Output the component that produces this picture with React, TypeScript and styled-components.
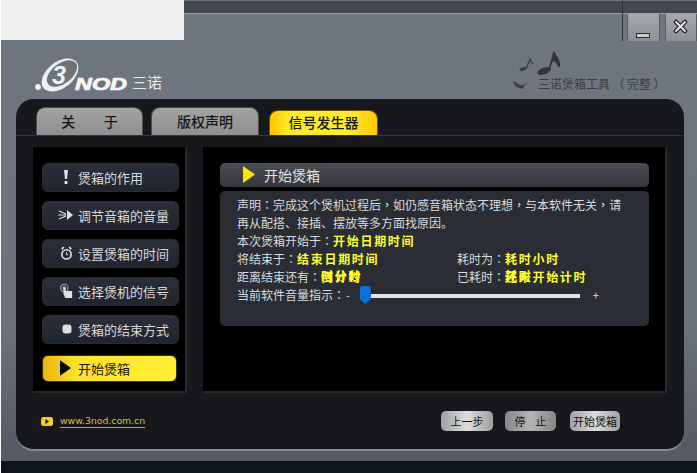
import React from 'react'
import styled, { createGlobalStyle } from 'styled-components'

const GlobalStyle = createGlobalStyle`
  html, body {
    margin: 0;
    background: #ffffff;
  }
  body {
    font-family: "Noto Sans CJK SC", "Liberation Sans", sans-serif;
  }
`

const Screen = styled.div`
  border-left: 1px solid #ffffff;
  box-sizing: border-box;
  display: flex;
  flex-direction: column;
  height: 473px;
  overflow: hidden;
  position: relative;
  width: 697px;
`

// Leftover bright patch in the top left corner of the capture
const BlankPatch = styled.div`
  background: #f0f0f0;
  height: 40px;
  left: -1px;
  position: absolute;
  top: 0;
  width: 184px;
`

const TopBar = styled.div`
  background: #434850;
  border-bottom: 1px solid #989ca3;
  border-top: 1px solid #6f747b;
  flex: none;
  height: 12px;
`

const WindowControls = styled.div`
  border-left: 1px solid #33373d;
  display: flex;
  gap: 5px;
  height: 41px;
  padding-left: 4px;
  position: absolute;
  right: 0;
  top: 0;
  width: 70px;
`

const ControlButton = styled.div<{ wide: number }>`
  align-items: flex-end;
  background: linear-gradient(#a6a8ab 0%, #8d9094 100%);
  border-left: 1px solid #5a5e63;
  border-right: 1px solid #5a5e63;
  box-sizing: border-box;
  display: flex;
  height: 27px;
  justify-content: center;
  margin-top: 14px;
  padding-bottom: 3px;
  width: ${({ wide }) => wide}px;
`

const Body = styled.div`
  background: linear-gradient(#70767e 0%, #6c7279 70%, #555a62 100%);
  display: flex;
  flex: none;
  flex-direction: column;
  height: 447px;
`

const Header = styled.div`
  display: flex;
  flex: none;
  height: 85px;
  justify-content: space-between;
  padding: 0 29px 0 33px;
`

const LogoBlock = styled.div`
  align-items: flex-end;
  display: flex;
  gap: 0;
  padding-bottom: 6px;
`

const LogoName = styled.span`
  color: #e8e9ea;
  font-size: 15px;
  line-height: 17px;
  padding-bottom: 3px;
`

const ProductBlock = styled.div`
  align-self: flex-end;
  display: flex;
  flex-direction: column;
  padding-bottom: 6px;
`

const ProductTitle = styled.div`
  align-items: center;
  color: #3b3f45;
  display: flex;
  font-size: 12px;
  gap: 10px;
  line-height: 18px;
`

const Panel = styled.div`
  background: #17181c;
  border-bottom: 2px solid #858a91;
  border-radius: 18px;
  box-sizing: border-box;
  display: flex;
  flex: none;
  flex-direction: column;
  height: 352px;
  margin-left: 15px;
  padding-top: 8px;
  width: 668px;
`

const TabRow = styled.div`
  align-items: flex-end;
  border-bottom: 1px solid #33353a;
  display: flex;
  flex: none;
  height: 28px;
  padding-left: 20px;
`

const Tab = styled.div<{ active?: boolean; wide: number; gapAfter: number }>`
  align-items: center;
  background: ${({ active }) =>
    active
      ? 'linear-gradient(90deg, #ffc400 0%, #ffe92c 18%, #ffe92c 75%, #ffc800 100%)'
      : 'linear-gradient(#a3a3a3 0%, #8f8f8f 100%)'};
  border: 1px solid ${({ active }) => (active ? '#6b5200' : '#4c4c4c')};
  border-bottom: none;
  border-radius: 9px 9px 0 0;
  box-sizing: border-box;
  color: #17171a;
  display: flex;
  font-size: 14px;
  font-weight: 500;
  height: ${({ active }) => (active ? 25 : 28)}px;
  justify-content: center;
  line-height: 20px;
  margin-right: ${({ gapAfter }) => gapAfter}px;
  padding-bottom: 2px;
  white-space: pre;
  width: ${({ wide }) => wide}px;
`

const ContentRow = styled.div`
  display: flex;
  flex: none;
  gap: 16px;
  height: 246px;
  margin-top: 11px;
  padding-left: 17px;
`

const SidePanel = styled.div`
  background: #000000;
  border-bottom: 2px solid #26282c;
  border-right: 2px solid #26282c;
  box-sizing: border-box;
  display: flex;
  flex-direction: column;
  padding: 16px 0 0 9px;
  width: 154px;
`

const MenuButton = styled.div<{ active?: boolean }>`
  align-items: center;
  background: ${({ active }) =>
    active
      ? 'linear-gradient(90deg, #e8b612 0%, #fde22a 25%, #ffef36 100%)'
      : 'linear-gradient(#2a2e37 0%, #21252e 100%)'};
  border: 1px solid ${({ active }) => (active ? '#3f3510' : '#2a2d35')};
  border-radius: 6px;
  box-sizing: border-box;
  color: ${({ active }) => (active ? '#1a1606' : '#d7d9dc')};
  display: flex;
  font-size: 13px;
  height: ${({ active }) => (active ? 27 : 29)}px;
  margin-bottom: 9px;
  margin-top: ${({ active }) => (active ? 2 : 0)}px;
  padding-bottom: 1px;
  width: ${({ active }) => (active ? 135 : 137)}px;
`

const IconSlot = styled.span<{ inset: number }>`
  box-sizing: border-box;
  display: flex;
  flex: none;
  justify-content: flex-end;
  padding-right: ${({ inset }) => inset}px;
  width: 35px;
`

const MainPanel = styled.div`
  background: #000000;
  border-bottom: 2px solid #26282c;
  border-right: 2px solid #26282c;
  box-sizing: border-box;
  display: flex;
  flex-direction: column;
  padding: 16px 0 0 17px;
  width: 464px;
`

const SectionBar = styled.div`
  align-items: center;
  background: linear-gradient(#4b4d53 0%, #35373c 100%);
  border-radius: 5px;
  box-sizing: border-box;
  color: #e2e3e4;
  display: flex;
  flex: none;
  font-size: 14px;
  gap: 9px;
  height: 24px;
  padding-bottom: 1px;
  padding-left: 23px;
  width: 429px;
`

const InfoBox = styled.div`
  background: #2a2d34;
  border-radius: 5px;
  box-sizing: border-box;
  color: #d9dbdd;
  display: flex;
  flex: none;
  flex-direction: column;
  font-size: 12px;
  height: 135px;
  line-height: 18px;
  margin-top: 4px;
  padding: 5px 0 0 17px;
  width: 429px;
`

const NoticeLine = styled.div`
  height: 18px;
  white-space: nowrap;
`

const Punct = styled.span`
  font-family: "Noto Sans CJK TC", "Noto Sans CJK SC", sans-serif;
`

const TitleParen = styled(Punct)`
  margin: 0 2.5px;
`

const InfoRow = styled.div`
  display: grid;
  grid-template-columns: 220px 1fr;
  height: 18px;
  white-space: nowrap;
`

const Value = styled.span`
  color: #ffff2e;
  font-weight: 700;
  letter-spacing: 1.7px;
  position: relative;
`

// The original draws a second string on top of the first one
const ValueOverlay = styled.span`
  left: 0;
  position: absolute;
  top: -1px;
`

const SliderRow = styled.div`
  align-items: center;
  display: flex;
  height: 18px;
  white-space: nowrap;
`

const SliderSign = styled.span`
  font-size: 11px;
  margin-left: 1px;
`

const SliderThumb = styled.div`
  background: #0d6fd8;
  border-radius: 3px 3px 0 0;
  clip-path: polygon(0 0, 100% 0, 100% 72%, 50% 100%, 0 72%);
  flex: none;
  height: 18px;
  margin-left: 10px;
  width: 11px;
`

const SliderTrack = styled.div`
  background: #e6e6e6;
  flex: none;
  height: 4px;
  margin-top: 2px;
  width: 209px;
`

const PlusSign = styled.span`
  font-size: 11px;
  margin-left: 13px;
`

const FooterRow = styled.div`
  align-items: center;
  display: flex;
  flex: 1;
  padding: 0 64px 0 25px;
`

const SiteLink = styled.a`
  align-items: center;
  color: #d9bf3c;
  display: flex;
  font-family: "DejaVu Sans", sans-serif;
  font-size: 9.3px;
  gap: 7px;
  line-height: 12px;
`

const SiteText = styled.span`
  border-bottom: 1px solid #c9a920;
  width: 85px;
`

const ActionGroup = styled.div`
  align-items: center;
  display: flex;
  margin-left: auto;
`

const ActionButton = styled.div<{ wide: number; gapAfter: number; dim?: boolean }>`
  align-items: center;
  background: ${({ dim }) =>
    dim
      ? 'linear-gradient(90deg, #858585 0%, #b5b5b5 50%, #858585 100%)'
      : 'linear-gradient(90deg, #a0a0a0 0%, #dcdcdc 50%, #a0a0a0 100%)'};
  border-radius: 5px;
  color: #141414;
  display: flex;
  font-size: 11px;
  height: 20px;
  justify-content: center;
  margin-right: ${({ gapAfter }) => gapAfter}px;
  white-space: pre;
  width: ${({ wide }) => wide}px;
`

const BottomStrip = styled.div`
  background: #0e141d;
  flex: 1;
`

const Logo = () => (
  <svg width="98" height="36" viewBox="0 0 98 36">
    <circle cx="4" cy="30" r="2.9" fill="#f2f3f4" />
    <ellipse cx="26" cy="18" rx="21" ry="13" fill="#eff0f1" transform="rotate(-38 26 18)" />
    <ellipse cx="28" cy="16.5" rx="17.5" ry="10" fill="#6e747c" transform="rotate(-38 28 16.5)" />
    <text x="18" y="27" fontFamily="Liberation Sans" fontSize="25" fontStyle="italic" fontWeight="700" fill="#eff0f1">
      3
    </text>
    <text
      x="41"
      y="33"
      fontFamily="Liberation Sans"
      fontSize="16"
      fontStyle="italic"
      fontWeight="700"
      fill="#f6f6f6"
      stroke="#f6f6f6"
      strokeWidth="0.7"
      textLength="52"
      lengthAdjust="spacingAndGlyphs"
    >
      NOD
    </text>
  </svg>
)

const MusicNotes = () => (
  <svg width="46" height="24" viewBox="0 0 46 24" style={{ marginLeft: 7 }}>
    <ellipse cx="4" cy="18" rx="3.6" ry="1.8" fill="#3d4148" transform="rotate(-20 4 18)" />
    <path d="M7 18 L11 8 C12 10 13 12 14 13" fill="none" stroke="#3d4148" strokeWidth="1.4" />
    <ellipse cx="25" cy="20" rx="7" ry="3.4" fill="#33373d" transform="rotate(-20 25 20)" />
    <path d="M30 19 L35 1 C36 6 42 9 40 16 C39 11 36 10 34.5 9" fill="#33373d" stroke="#33373d" strokeWidth="1.6" />
  </svg>
)

const Swoosh = () => (
  <svg width="16" height="9" viewBox="0 0 16 9">
    <path d="M1 2 C3 0 5 4 8 5 C10 6 12 4 15 3 L12 6 L11 9 C7 8 3 7 1 2 Z" fill="#3b3f45" />
  </svg>
)

const MinimizeIcon = () => (
  <svg width="14" height="5" viewBox="0 0 14 5">
    <rect x="0.5" y="0.5" width="13" height="4" fill="#cfcfcf" stroke="#26282b" />
  </svg>
)

const CloseIcon = () => (
  <svg width="15" height="15" viewBox="0 0 15 15" style={{ marginBottom: 4 }}>
    <path d="M3 3 L12 12 M12 3 L3 12" stroke="#1f2023" strokeWidth="4.5" strokeLinecap="round" />
    <path d="M3 3 L12 12 M12 3 L3 12" stroke="#e6e6e6" strokeWidth="2" strokeLinecap="round" />
  </svg>
)

const BangIcon = () => (
  <svg width="8" height="16" viewBox="0 0 8 16">
    <path d="M2 1 H6 L5 10 H3 Z" fill="#dfe0e1" />
    <rect x="2.6" y="12" width="2.8" height="3" fill="#dfe0e1" />
  </svg>
)

const SpeakerIcon = () => (
  <svg width="16" height="14" viewBox="0 0 16 14">
    <path d="M9 2 L15 7 L9 12 Z" fill="#dfe0e1" />
    <path d="M1 3 L8 6 M0 7 H8 M1 11 L8 8" stroke="#dfe0e1" strokeWidth="1.2" />
  </svg>
)

const ClockIcon = () => (
  <svg width="13" height="16" viewBox="0 0 14 16">
    <circle cx="7" cy="9.5" r="5" fill="none" stroke="#dfe0e1" strokeWidth="1.8" />
    <path d="M2 4 L4 1.5 M12 4 L10 1.5" stroke="#dfe0e1" strokeWidth="2" />
    <path d="M7 7 V10 H9" fill="none" stroke="#dfe0e1" strokeWidth="1" />
  </svg>
)

const TouchIcon = () => (
  <svg width="13" height="16" viewBox="0 0 15 17">
    <circle cx="5" cy="5" r="4.3" fill="none" stroke="#a9acb0" strokeWidth="1.2" />
    <circle cx="5" cy="5" r="2" fill="#c9cbcd" />
    <path d="M4 5 H6.5 V8.5 H14 V16.5 H6 L4 12 Z" fill="#dfe0e1" />
  </svg>
)

const DotIcon = () => (
  <svg width="10" height="10" viewBox="0 0 10 10">
    <rect x="0.5" y="0.5" width="9" height="9" rx="3" fill="#dfe0e1" />
  </svg>
)

const TriangleIcon = ({ fill, wide, high }: { fill: string; wide: number; high: number }) => (
  <svg width={wide} height={high} viewBox="0 0 10 14">
    <path d="M0 0 L10 7 L0 14 Z" fill={fill} />
  </svg>
)

const PlayBadge = () => (
  <svg width="12" height="9" viewBox="0 0 12 9">
    <rect width="12" height="9" rx="2.5" fill="#f0cd2a" />
    <path d="M4.5 2 L8 4.5 L4.5 7 Z" fill="#17181c" />
  </svg>
)

const menuItems = [
  { label: '煲箱的作用', icon: <BangIcon />, inset: 8 },
  { label: '调节音箱的音量', icon: <SpeakerIcon />, inset: 4 },
  { label: '设置煲箱的时间', icon: <ClockIcon />, inset: 5 },
  { label: '选择煲机的信号', icon: <TouchIcon />, inset: 5 },
  { label: '煲箱的结束方式', icon: <DotIcon />, inset: 6 },
]

export default function App() {
  return (
    <Screen>
      <GlobalStyle />
      <TopBar />
      <Body>
        <Header>
          <LogoBlock>
            <Logo />
            <LogoName>三诺</LogoName>
          </LogoBlock>
          <ProductBlock>
            <MusicNotes />
            <ProductTitle>
              <Swoosh />
              <span>
                三诺煲箱工具<TitleParen>（</TitleParen>完整<TitleParen>）</TitleParen>
              </span>
            </ProductTitle>
          </ProductBlock>
        </Header>
        <Panel>
          <TabRow>
            <Tab wide={107} gapAfter={8}>关         于</Tab>
            <Tab wide={108} gapAfter={10}>版权声明</Tab>
            <Tab wide={109} gapAfter={0} active>信号发生器</Tab>
          </TabRow>
          <ContentRow>
            <SidePanel>
              {menuItems.map(({ label, icon, inset }) => (
                <MenuButton key={label}>
                  <IconSlot inset={inset}>{icon}</IconSlot>
                  <span>{label}</span>
                </MenuButton>
              ))}
              <MenuButton active>
                <IconSlot inset={7}>
                  <TriangleIcon fill="#0b0b06" wide={11} high={16} />
                </IconSlot>
                <span>开始煲箱</span>
              </MenuButton>
            </SidePanel>
            <MainPanel>
              <SectionBar>
                <TriangleIcon fill="#ffe600" wide={12} high={17} />
                <span>开始煲箱</span>
              </SectionBar>
              <InfoBox>
                <NoticeLine>
                  声明<Punct>：</Punct>完成这个煲机过程后<Punct>，</Punct>如仍感音箱状态不理想<Punct>，</Punct>与本软件无关<Punct>，</Punct>请
                </NoticeLine>
                <NoticeLine>再从配搭、接插、摆放等多方面找原因。</NoticeLine>
                <InfoRow>
                  <span>
                    本次煲箱开始于<Punct>：</Punct>
                    <Value>开始日期时间</Value>
                  </span>
                </InfoRow>
                <InfoRow>
                  <span>
                    将结束于<Punct>：</Punct>
                    <Value>结束日期时间</Value>
                  </span>
                  <span>
                    耗时为<Punct>：</Punct>
                    <Value>耗时小时</Value>
                  </span>
                </InfoRow>
                <InfoRow>
                  <span>
                    距离结束还有<Punct>：</Punct>
                    <Value>
                      倒计时
                      <ValueOverlay>时分秒</ValueOverlay>
                    </Value>
                  </span>
                  <span>
                    已耗时<Punct>：</Punct>
                    <Value>
                      还未开始计时
                      <ValueOverlay>耗时</ValueOverlay>
                    </Value>
                  </span>
                </InfoRow>
                <SliderRow>
                  <span>
                    当前软件音量指示<Punct>：</Punct>
                  </span>
                  <SliderSign>-</SliderSign>
                  <SliderThumb />
                  <SliderTrack />
                  <PlusSign>+</PlusSign>
                </SliderRow>
              </InfoBox>
            </MainPanel>
          </ContentRow>
          <FooterRow>
            <SiteLink>
              <PlayBadge />
              <SiteText>www.3nod.com.cn</SiteText>
            </SiteLink>
            <ActionGroup>
              <ActionButton wide={52} gapAfter={12}>上一步</ActionButton>
              <ActionButton wide={51} gapAfter={14} dim>停    止</ActionButton>
              <ActionButton wide={50} gapAfter={0}>开始煲箱</ActionButton>
            </ActionGroup>
          </FooterRow>
        </Panel>
      </Body>
      <BottomStrip />
      <BlankPatch />
      <WindowControls>
        <ControlButton wide={33}>
          <MinimizeIcon />
        </ControlButton>
        <ControlButton wide={33}>
          <CloseIcon />
        </ControlButton>
      </WindowControls>
    </Screen>
  )
}
